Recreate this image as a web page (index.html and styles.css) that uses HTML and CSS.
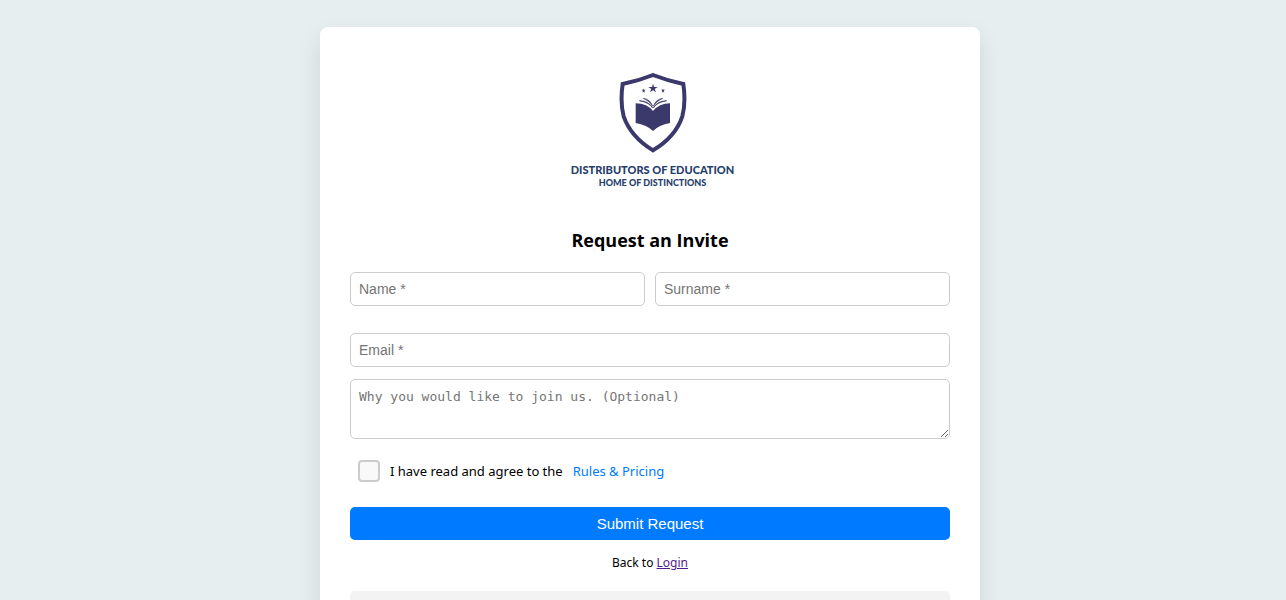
FILE: index.html
```
<!DOCTYPE html>
<html lang="en">
<head>
    <meta charset="UTF-8">
    <meta name="viewport" content="width=device-width, initial-scale=1.0">
    <title>Request an Invite</title>
    <link rel="stylesheet" href="styles.css">
</head>
<body>
    <div class="container">
        <div class="logo">
            <svg class="shield" viewBox="40 21 204 243" aria-hidden="true">
                <path d="M142 30 Q188 48 233 57 Q241 112 230 154 Q210 215 142 256 Q75 215 54 154 Q43 112 51 57 Q97 48 142 30 Z" fill="none" stroke="#3b386b" stroke-width="12"/>
                <path d="M142 56 L145 66 L156 66 L147 72 L151 82 L142 76 L133 82 L137 72 L128 66 L139 66 Z" fill="#3b386b"/>
                <path d="M114 70 L115 74 L120 74 L116 78 L118 83 L114 80 L110 83 L112 78 L108 74 L113 74 Z" fill="#3b386b"/>
                <path d="M172 70 L173 74 L178 74 L174 78 L176 83 L172 80 L168 83 L170 78 L166 74 L171 74 Z" fill="#3b386b"/>
                <path d="M90 115 Q125 116 142 138 Q160 116 193 115 V174 Q160 180 142 198 Q124 180 90 174 Z" fill="#3b386b"/>
                <path d="M101 107 Q128 107 141 129 Q132 113 101 107 Z M183 107 Q156 107 143 129 Q152 113 183 107 Z" fill="#3b386b" stroke="#3b386b" stroke-width="2"/>
                <path d="M113 100 Q134 103 141 124 Q131 107 113 100 Z M171 100 Q150 103 143 124 Q153 107 171 100 Z" fill="#3b386b" stroke="#3b386b" stroke-width="2"/>
            </svg>
            <span class="logo-name">DISTRIBUTORS OF EDUCATION</span>
            <span class="logo-tagline">HOME OF DISTINCTIONS</span>
        </div>

        <h2>Request an Invite</h2>

        <form>
            <div class="name-row">
                <input type="text" name="name" placeholder="Name *" aria-label="Name" required>
                <input type="text" name="surname" placeholder="Surname *" aria-label="Surname" required>
            </div>
            <input type="email" name="email" placeholder="Email *" aria-label="Email" required>
            <textarea name="reason" placeholder="Why you would like to join us. (Optional)" aria-label="Why you would like to join us"></textarea>
            <div class="terms">
                <input type="checkbox" id="agree" required>
                <label for="agree">I have read and agree to the</label>
                <a href="#rules">Rules &amp; Pricing</a>
            </div>
            <button type="submit">Submit Request</button>
        </form>

        <p class="back">Back to <a href="#login">Login</a></p>

        <div class="message"></div>
    </div>
</body>
</html>
```
FILE: styles.css
```
* {
    box-sizing: border-box;
}

body {
    font-family: "Segoe UI", "Noto Sans", sans-serif;
    margin: 0;
    padding: 27px 0 27px 14px;
    background-color: #e6eef0;
}

.container {
    max-width: 660px;
    margin: 0 auto;
    padding: 45px 30px 30px;
    background-color: #fff;
    border-radius: 8px;
    box-shadow: 0 10px 25px rgba(0, 0, 0, 0.1);
}

.logo {
    display: flex;
    flex-direction: column;
    align-items: center;
    padding-left: 5px;
    color: #26406b;
    font-family: Lato, sans-serif;
    font-weight: 900;
}

.shield {
    width: 68px;
    height: 81px;
    margin-bottom: 9px;
}

.logo-name {
    font-size: 11px;
    line-height: 15px;
}

.logo-tagline {
    font-size: 9px;
    line-height: 12px;
}

h2 {
    margin: 38px 0 18px;
    font-family: "Segoe UI", "Open Sans", sans-serif;
    font-size: 18px;
    line-height: 27px;
    text-align: center;
}

form {
    display: flex;
    flex-direction: column;
}

input[type="text"],
input[type="email"],
textarea {
    width: 100%;
    padding: 8px;
    border: 1px solid #ccc;
    border-radius: 5px;
    font-family: Arial, "Liberation Sans", sans-serif;
    font-size: 14px;
    line-height: 16px;
}

input[type="text"],
input[type="email"] {
    height: 34px;
}

.name-row {
    display: flex;
    gap: 10px;
    margin-bottom: 27px;
}

textarea {
    height: 60px;
    margin-top: 12px;
    font-family: Consolas, "DejaVu Sans Mono", monospace;
    font-size: 13px;
    line-height: 18px;
    resize: vertical;
}

.terms {
    display: flex;
    align-items: center;
    gap: 10px;
    margin: 20px 0 24px;
    padding-left: 8px;
    font-size: 13px;
    line-height: 24px;
}

.terms input {
    appearance: none;
    width: 22px;
    height: 22px;
    margin: 0;
    border: 2px solid #ccc;
    border-radius: 4px;
    background-color: #f9f9f9;
}

.terms input:checked {
    background-color: #007bff;
}

.terms a {
    color: #007bff;
    text-decoration: none;
}

button {
    height: 33px;
    border: none;
    border-radius: 5px;
    background-color: #007bff;
    color: #fff;
    font-family: Arial, "Liberation Sans", sans-serif;
    font-size: 15px;
    cursor: pointer;
}

.back {
    margin: 12px 0 18px;
    font-size: 12px;
    line-height: 21px;
    text-align: center;
}

.back a {
    color: #551a8b;
}

.message {
    min-height: 60px;
    border-radius: 5px;
    background-color: #f3f3f3;
}
```
